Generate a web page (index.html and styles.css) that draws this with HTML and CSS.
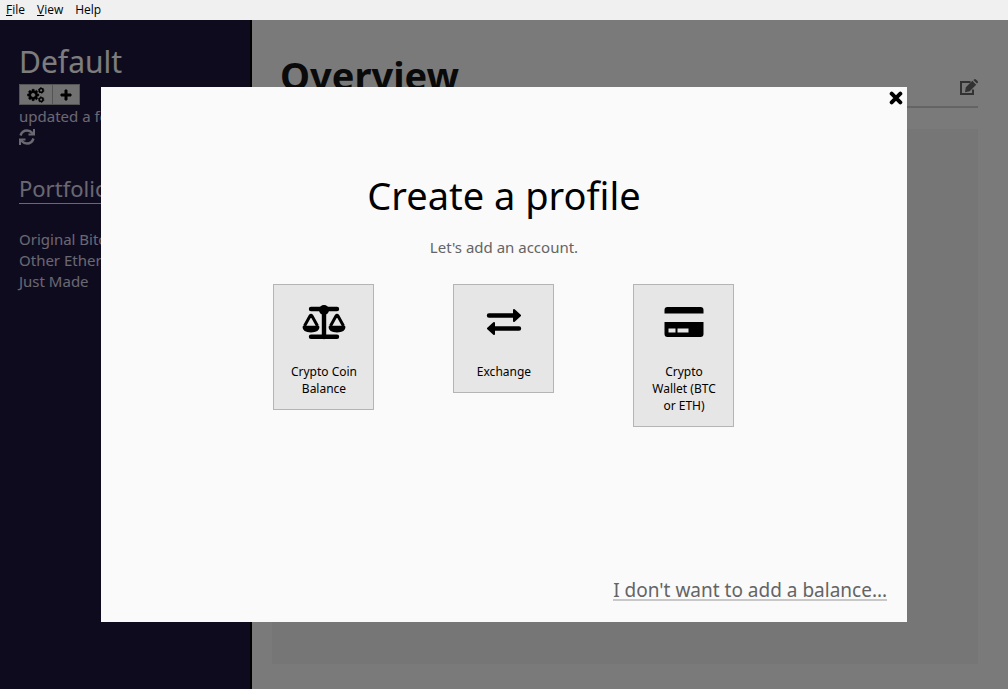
FILE: index.html
```html
<!DOCTYPE html>
<html lang="en">
<head>
<meta charset="utf-8">
<meta name="viewport" content="width=device-width, initial-scale=1">
<title>Overview</title>
<link rel="stylesheet" href="styles.css">
</head>
<body>
<nav class="menubar" aria-label="Application menu">
  <button class="menu-item" type="button"><span class="key">F</span>ile</button>
  <button class="menu-item" type="button"><span class="key">V</span>iew</button>
  <button class="menu-item" type="button">Help</button>
</nav>
<div class="app">
  <aside class="sidebar">
    <h2 class="profile-name">Default</h2>
    <div class="profile-actions">
      <button class="small-button" type="button" aria-label="Settings">
        <svg class="icon-cogs" viewBox="0 0 1920 1792" aria-hidden="true">
          <path fill-rule="evenodd" stroke="currentColor" stroke-width="50" d="M896 896q0-106-75-181t-181-75-181 75-75 181 75 181 181 75 181-75 75-181zm384-91v185q0 10-7 19.500t-16 10.500l-155 24q-11 35-32 76 34 48 90 115 7 11 7 20 0 12-7 19-23 30-82.500 89.500t-78.500 59.500q-11 0-21-7l-115-90q-37 19-77 31-11 108-23 155-7 24-30 24h-186q-11 0-20-7.500t-10-17.500l-23-153q-34-10-75-31l-118 89q-7 7-20 7-11 0-21-8-144-133-144-160 0-9 7-19 10-14 41-53t47-61q-23-44-35-82l-152-24q-10-1-17-9.500t-7-19.500v-185q0-10 7-19.500t16-10.500l155-24q11-35 32-76-34-48-90-115-7-11-7-20 0-12 7-20 22-30 82-89t79-59q11 0 21 7l115 90q34-18 77-32 11-108 23-154 7-24 30-24h186q11 0 20 7.500t10 17.500l23 153q34 10 75 31l118-89q8-7 20-7 11 0 21 8 144 133 144 160 0 8-7 19-12 16-42 54t-45 60q23 48 34 82l152 23q10 2 17 10.500t7 19.500z"/>
          <g fill="none" stroke="currentColor">
            <circle cx="1536" cy="384" r="210" stroke-width="180"/>
            <circle cx="1536" cy="384" r="310" stroke-width="100" stroke-dasharray="162 163"/>
            <circle cx="1536" cy="1408" r="210" stroke-width="180"/>
            <circle cx="1536" cy="1408" r="310" stroke-width="100" stroke-dasharray="162 163"/>
          </g>
        </svg>
      </button>
      <button class="small-button add" type="button" aria-label="Add profile">
        <svg class="icon-plus" viewBox="0 0 12 12" aria-hidden="true"><path d="M5 1h2v4h4v2H7v4H5V7H1V5h4z" stroke="currentColor" stroke-width="1" stroke-linejoin="round"/></svg>
      </button>
    </div>
    <p class="updated">updated a few seconds ago</p>
    <button class="refresh" type="button" aria-label="Refresh">
      <svg class="icon-refresh" viewBox="0 0 16 16" aria-hidden="true">
        <path d="M1.500 6.500C2.500 3.500 5 1.500 8 1.500c2 0 4 1 5.200 2.500M14.500 9.500c-1 3-3.500 5-6.500 5-2 0-4-1-5.200-2.500" fill="none" stroke="currentColor" stroke-width="2.400"/>
        <path d="M16 0v6.500H9.500V4.500H12l2-2V0zM0 16V9.500h6.500v2H4l-2 2V16z"/>
      </svg>
    </button>
    <h3 class="section-title">Portfolios</h3>
    <ul class="portfolios">
      <li><a class="portfolio-link" href="#">Original Bitcoin</a></li>
      <li><a class="portfolio-link" href="#">Other Ethereum</a></li>
      <li><a class="portfolio-link" href="#">Just Made</a></li>
    </ul>
  </aside>
  <main class="content">
    <header class="content-head">
      <h1 class="page-title">Overview</h1>
      <button class="edit" type="button" aria-label="Edit">
        <svg class="icon-edit" viewBox="0 0 18 16" aria-hidden="true">
          <path d="M10.500 3H1v12h12v-4.500" fill="none" stroke="currentColor" stroke-width="2"/>
          <path d="M12.300 1.800l3.900 3.900-6.500 6.500-4.700 1 .8-4.900zM13.300 1l.8-.6q.9-.8 1.800 0l1.700 1.700q.8.900 0 1.800l-.7.700z"/>
        </svg>
      </button>
    </header>
    <section class="panel"></section>
  </main>
  <div class="overlay">
    <div class="dialog" role="dialog" aria-modal="true" aria-labelledby="dialog-title">
      <button class="close" type="button" aria-label="Close">
        <svg class="icon-close" viewBox="0 0 12 12" aria-hidden="true"><path d="M2.300 2.300l7.400 7.400M9.700 2.300L2.300 9.700" fill="none" stroke="currentColor" stroke-width="3.400" stroke-linecap="round"/></svg>
      </button>
      <div class="dialog-body">
        <h2 class="dialog-title" id="dialog-title">Create a profile</h2>
        <p class="dialog-text">Let's add an account.</p>
        <div class="choices">
          <button class="choice" type="button">
            <svg class="choice-icon" viewBox="0 0 48 48" aria-hidden="true">
              <path d="M11 9h26M11 36.800h26M24 8v29" fill="none" stroke="currentColor" stroke-width="4.400" stroke-linecap="round"/>
              <circle cx="24" cy="10" r="5"/>
              <path d="M4.500 26l5.500-10q1-1.500 2 0l5.500 10M30.500 26l5.500-10q1-1.500 2 0l5.500 10" fill="none" stroke="currentColor" stroke-width="3" stroke-linejoin="round"/>
              <path d="M3.500 25.800h15l1 1q0 5.700-8.500 5.700t-8.500-5.700zM29.500 25.800h15l1 1q0 5.700-8.500 5.700t-8.500-5.700z"/>
            </svg>
            Crypto Coin Balance
          </button>
          <button class="choice" type="button">
            <svg class="choice-icon" viewBox="0 0 48 48" aria-hidden="true">
              <path d="M9 15.500h25M39 28.500H14" fill="none" stroke="currentColor" stroke-width="4.400" stroke-linecap="round"/>
              <path d="M34 10l6 5.500-6 5.500zM14 23l-6 5.500 6 5.500z" stroke="currentColor" stroke-width="2" stroke-linejoin="round"/>
            </svg>
            Exchange
          </button>
          <button class="choice" type="button">
            <svg class="choice-icon" viewBox="0 0 48 48" aria-hidden="true">
              <path fill-rule="evenodd" d="M4.500 13.500V10q0-3 3-3h33q3 0 3 3v3.500zM4.500 22h39v12q0 3-3 3h-33q-3 0-3-3zM8.500 28.500v4h7v-4zM17.500 28.500v4h11v-4z"/>
            </svg>
            Crypto Wallet (BTC or ETH)
          </button>
        </div>
      </div>
      <footer class="dialog-foot"><a class="skip" href="#">I don't want to add a balance...</a></footer>
    </div>
  </div>
</div>
</body>
</html>
```
FILE: styles.css
```css
* { box-sizing: border-box; }
body {
  margin: 0;
  min-height: 100vh;
  display: flex;
  flex-direction: column;
  font: 15px/21px "Noto Sans", "Open Sans", sans-serif;
  color: #141414;
}
h1, h2, h3, p, ul { margin: 0; padding: 0; font-weight: 400; }
ul { list-style: none; }
button { font: inherit; color: inherit; border: 0; padding: 0; background: none; }
svg { display: block; fill: currentColor; }

.menubar {
  display: flex;
  gap: 12px;
  height: 20px;
  padding: 0 6px;
  background: #f0f0f0;
  color: #000;
  font: 12px/20px "Open Sans", "Noto Sans", sans-serif;
}
.key { text-decoration: underline; }

.app { position: relative; flex: 1; display: flex; }
.sidebar {
  width: 252px;
  padding: 23px 19px;
  overflow: hidden;
  background: #1e163f;
  border-right: 2px solid #000;
  color: #d4d0e0;
}
.profile-name { font-size: 30px; line-height: 38px; color: #fafafa; }
.profile-actions { display: flex; margin-top: 3px; }
.small-button {
  display: grid;
  place-items: center;
  height: 21px;
  padding: 0 7px;
  background: #e2e2e2;
  border: 1px solid #a8a8a8;
  color: #000;
}
.small-button.add { margin-left: -1px; }
.icon-cogs { width: 18px; height: 16px; }
.icon-plus { width: 12px; height: 12px; }
.updated { margin-top: 1px; white-space: nowrap; }
.refresh { display: block; margin-top: 2px; }
.icon-refresh { width: 16px; height: 16px; }
.section-title {
  margin-top: 29px;
  padding-bottom: 1px;
  border-bottom: 1px solid currentColor;
  font-size: 22px;
  line-height: 28px;
}
.portfolios { margin-top: 25px; white-space: nowrap; }
.portfolio-link { color: inherit; text-decoration: none; }

.content {
  flex: 1;
  display: flex;
  flex-direction: column;
  gap: 21px;
  padding: 30px 30px 25px 20px;
  background: #f5f5f5;
}
.content-head {
  display: flex;
  justify-content: space-between;
  align-items: flex-end;
  height: 58px;
  padding: 0 0 11px 8px;
  border-bottom: 2px solid #c8c8c8;
}
.page-title { align-self: flex-start; font-size: 38px; line-height: 50px; font-weight: 700; }
.edit { color: #646464; }
.icon-edit { width: 18px; height: 16px; }
.panel { flex: 1; background: #ededed; }

.overlay {
  position: absolute;
  inset: 0;
  display: grid;
  grid-template: 10% 80% 10% / 10% 80% 10%;
  background: rgba(0, 0, 0, 0.5);
}
.dialog {
  grid-area: 2 / 2;
  display: flex;
  flex-direction: column;
  padding: 4px 4px 21px;
  background: #fafafa;
  color: #000;
}
.close { align-self: flex-end; }
.icon-close { width: 14px; height: 14px; }
.dialog-body { flex: 1; padding: 64px 76px 0; text-align: center; }
.dialog-title { font-size: 38px; line-height: 52px; }
.dialog-text { margin-top: 16px; color: #646464; }
.choices {
  display: flex;
  justify-content: center;
  align-items: flex-start;
  gap: 79px;
  margin-top: 26px;
}
.choice {
  display: flex;
  flex-direction: column;
  align-items: center;
  gap: 15px;
  width: 101px;
  padding: 15px 14px 12px;
  background: #e6e6e6;
  border: 1px solid #b4b4b4;
  font-size: 12px;
  line-height: 17px;
}
.choice-icon { width: 48px; height: 48px; }
.dialog-foot { padding-right: 16px; line-height: 18px; text-align: right; }
.skip {
  display: inline-block;
  border-bottom: 2px solid #c8c8c8;
  color: #646464;
  font-size: 19px;
  line-height: 18px;
  text-decoration: none;
}
```
